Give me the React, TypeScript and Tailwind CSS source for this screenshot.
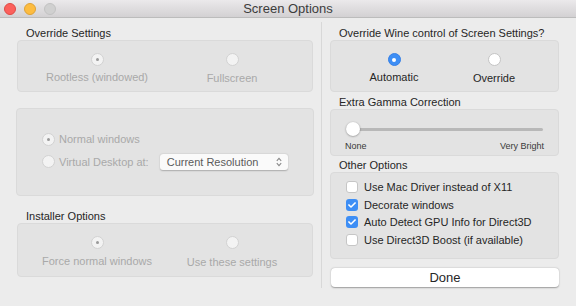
import { FaCheck } from "react-icons/fa";

const font = { fontFamily: '"Liberation Sans", Arial, sans-serif' };

const Radio = ({ on, disabled, blue }: { on?: boolean; disabled?: boolean; blue?: boolean }) => {
  if (blue) {
    return (
      <div className="w-[13px] h-[13px] rounded-full bg-[#3d8ef5] border border-[#3680e6] flex items-center justify-center">
        <div className="w-[4px] h-[4px] rounded-full bg-white" />
      </div>
    );
  }
  return (
    <div
      className={
        disabled
          ? "w-[13px] h-[13px] rounded-full bg-[#f3f3f3] border border-[#d2d2d2] flex items-center justify-center"
          : "w-[13px] h-[13px] rounded-full bg-white border border-[#c4c4c4] flex items-center justify-center"
      }
    >
      {on && <div className="w-[3px] h-[3px] rounded-full bg-[#9a9a9a]" />}
    </div>
  );
};

const Check = ({ on }: { on?: boolean }) =>
  on ? (
    <div className="w-[12px] h-[12px] rounded-[3px] bg-[#3d8ef5] flex items-center justify-center">
      <FaCheck className="text-white w-[8px] h-[8px]" />
    </div>
  ) : (
    <div className="w-[12px] h-[12px] rounded-[3px] bg-white border border-[#c6c6c6]" />
  );

const Label = ({ text, h, mt }: { text: string; h: string; mt: string }) => (
  <div className={`${h} ${mt} flex items-center text-[11px] text-[#262626]`}>{text}</div>
);

export default function App() {
  const options = [
    { label: "Use Mac Driver instead of X11", on: false },
    { label: "Decorate windows", on: true },
    { label: "Auto Detect GPU Info for Direct3D", on: true },
    { label: "Use Direct3D Boost (if available)", on: false },
  ];
  return (
    <div className="w-[576px] h-[306px] bg-[#ececec] overflow-hidden" style={font}>
      <div className="h-[18px] bg-gradient-to-b from-[#ebe9eb] to-[#d3d1d3] border-b border-[#bcbcbc] flex items-center relative">
        <div className="flex gap-[8px] pl-[4px]">
          <div className="w-[12px] h-[12px] rounded-full bg-[#fc605c] border border-[#de4a45]" />
          <div className="w-[12px] h-[12px] rounded-full bg-[#fdbc40] border border-[#dea236]" />
          <div className="w-[12px] h-[12px] rounded-full bg-[#d0d0d0] border border-[#c2c2c2]" />
        </div>
        <div className="absolute inset-0 flex items-center justify-center text-[13px] text-[#3c3c3c]">Screen Options</div>
      </div>

      <div className="flex">
        {/* left column */}
        <div className="w-[321px] flex flex-col pl-[17px] pr-[8px]">
          <div className="pl-[9px]">
            <Label text="Override Settings" h="h-[14px]" mt="mt-[8px]" />
          </div>
          <div className="h-[52px] rounded-[4px] bg-[#e3e3e3] border border-[#dadada] flex pl-[14px] gap-[5px]">
            <div className="w-[130px] flex flex-col items-center pt-[12px]">
              <Radio on disabled />
              <div className="mt-[3px] text-[11px] text-[#a9a9a9]">Rootless (windowed)</div>
            </div>
            <div className="w-[130px] flex flex-col items-center pt-[12px]">
              <Radio disabled />
              <div className="mt-[4px] text-[11px] text-[#a9a9a9]">Fullscreen</div>
            </div>
          </div>

          <div className="h-[88px] mt-[16px] -ml-[1px] -mr-[1px] rounded-[4px] bg-[#e3e3e3] border border-[#dadada] flex flex-col pl-[25px] pt-[22px] gap-[6px]">
            <div className="flex items-center gap-[4px]">
              <Radio on disabled />
              <span className="text-[11px] text-[#a9a9a9]">Normal windows</span>
            </div>
            <div className="flex items-center gap-[4px]">
              <Radio disabled />
              <span className="text-[11px] text-[#a9a9a9]">Virtual Desktop at:</span>
              <div className="ml-[7px] w-[128px] h-[16px] bg-[#fafafa] rounded-[3px] shadow-[0_0.5px_1.5px_rgba(0,0,0,0.25)] flex items-center justify-between pl-[7px] pr-[6px]">
                <span className="text-[11px] text-[#5a5a5a]">Current Resolution</span>
                <svg width="6" height="10" viewBox="0 0 6 10" fill="none" stroke="#8a8a8a" strokeWidth="1.1">
                  <path d="M0.8 3.8 L3 1.3 L5.2 3.8" />
                  <path d="M0.8 6.2 L3 8.7 L5.2 6.2" />
                </svg>
              </div>
            </div>
          </div>

          <div className="pl-[9px]">
            <Label text="Installer Options" h="h-[14px]" mt="mt-[13px]" />
          </div>
          <div className="h-[54px] rounded-[4px] bg-[#e3e3e3] border border-[#dadada] flex pl-[14px] gap-[5px]">
            <div className="w-[130px] flex flex-col items-center pt-[12px]">
              <Radio on disabled />
              <div className="mt-[4px] text-[11px] text-[#a9a9a9]">Force normal windows</div>
            </div>
            <div className="w-[130px] flex flex-col items-center pt-[12px]">
              <Radio disabled />
              <div className="mt-[5px] text-[11px] text-[#a9a9a9]">Use these settings</div>
            </div>
          </div>
        </div>

        {/* divider */}
        <div className="w-px h-[266px] mt-[4px] bg-[#d8d8d8]" />

        {/* right column */}
        <div className="flex-1 flex flex-col pl-[8px] pr-[17px]">
          <div className="pl-[9px]">
            <Label text="Override Wine control of Screen Settings?" h="h-[14px]" mt="mt-[8px]" />
          </div>
          <div className="h-[52px] rounded-[4px] bg-[#e3e3e3] border border-[#dadada] flex pl-[18px] gap-[10px]">
            <div className="w-[90px] flex flex-col items-center pt-[12px]">
              <Radio blue />
              <div className="mt-[3px] text-[11px] text-[#262626]">Automatic</div>
            </div>
            <div className="w-[90px] flex flex-col items-center pt-[12px]">
              <Radio />
              <div className="mt-[4px] text-[11px] text-[#262626]">Override</div>
            </div>
          </div>

          <div className="pl-[9px]">
            <Label text="Extra Gamma Correction" h="h-[13px]" mt="mt-[4px]" />
          </div>
          <div className="h-[47px] rounded-[4px] bg-[#e3e3e3] border border-[#dadada] flex flex-col pt-[12px]">
            <div className="relative h-[14px] flex items-center ml-[22px] mr-[15px]">
              <div className="h-[3px] w-full bg-[#b8b8b8] rounded-full" />
              <div className="absolute left-0 top-0 w-[14px] h-[14px] -ml-[7px] rounded-full bg-white shadow-[0_0.5px_2px_rgba(0,0,0,0.4)]" />
            </div>
            <div className="flex justify-between mt-[4px] px-[14px] text-[9px] text-[#3a3a3a]">
              <span>None</span>
              <span>Very Bright</span>
            </div>
          </div>

          <div className="pl-[9px]">
            <Label text="Other Options" h="h-[14px]" mt="mt-[2px]" />
          </div>
          <div className="h-[87px] rounded-[4px] bg-[#e3e3e3] border border-[#dadada] flex flex-col pl-[15px] pt-[8px] gap-[5px]">
            {options.map((o) => (
              <div key={o.label} className="flex items-center gap-[6px] h-[12.5px]">
                <Check on={o.on} />
                <span className="text-[11px] text-[#262626]">{o.label}</span>
              </div>
            ))}
          </div>

          <div className="mt-[9px] h-[19px] ml-[1px] rounded-[4px] bg-white shadow-[0_0.5px_1.5px_rgba(0,0,0,0.35)] flex items-center justify-center text-[13px] text-[#262626]">
            Done
          </div>
        </div>
      </div>
    </div>
  );
}
